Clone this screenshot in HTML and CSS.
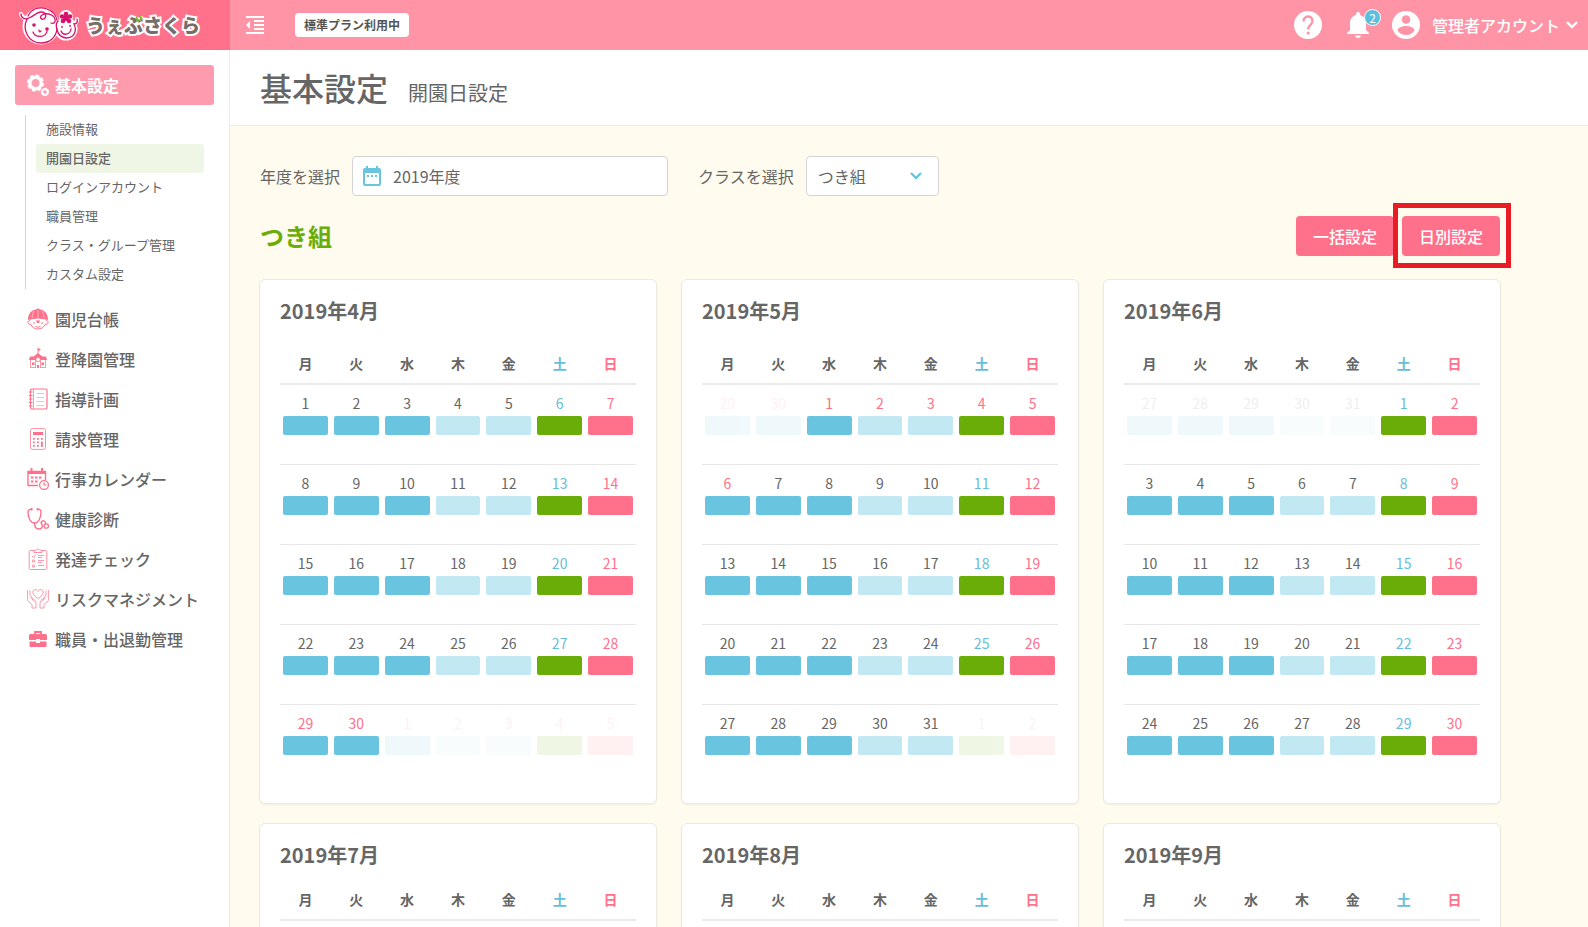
FILE: index.html
```html
<!DOCTYPE html>
<html lang="ja">
<head>
<meta charset="utf-8">
<meta name="viewport" content="width=device-width, initial-scale=1">
<title>開園日設定 | うぇぶさくら</title>
<link rel="stylesheet" href="styles.css">
</head>
<body>
<header class="topbar">
  <a class="brand" href="#" aria-label="うぇぶさくら">
    <svg class="brand-mark" viewBox="18 2 62 46" aria-hidden="true">
      <g fill="#fff" stroke="#fff" stroke-width="4" stroke-linejoin="round" stroke-linecap="round">
        <circle cx="41" cy="26" r="16.500"/><circle cx="66" cy="29" r="9.500"/><circle cx="66" cy="17" r="5"/><path fill="none" d="M21 14q1 4 5 4M77 19q0 4-3 6"/>
      </g>
      <g fill="none" stroke="#d8116b" stroke-width="1.300" stroke-linecap="round">
        <path d="M21 14c0 4 4 6 8 4 5-2 8-6 12-6 5 0 6 5 3 7-3 1-5-2-2-4 5-3 12 0 13 4 1 3-1 5-4 4"/>
        <path d="M28 16C31 9 39 6 47 9c5 2 9 6 10 11M27 19c-5 10 1 24 14 24 9 0 15-6 16-14"/>
        <path d="M58 21c-3 3-2 16 8 17 9 0 11-8 8-14 3 0 4-2 3-5"/>
        <path d="M33 32c2 6 13 6 14-1M39 30q0 3 2 1M61 31c2 5 9 4 10-2"/>
      </g>
      <g fill="#d8116b"><circle cx="34" cy="25" r="1.800"/><circle cx="47" cy="29" r="1.800"/><circle cx="62" cy="27" r=".9"/><circle cx="70" cy="26" r=".9"/>
        <circle cx="66" cy="14" r="2.300"/><circle cx="70" cy="16.500" r="2.300"/><circle cx="69" cy="21" r="2.300"/><circle cx="63" cy="21" r="2.300"/><circle cx="62" cy="16.500" r="2.300"/><circle cx="66" cy="18" r="3"/></g>
    </svg>
    <span class="brand-name">うぇぶさくら
      <svg class="brand-sprout" viewBox="0 0 8 8" aria-hidden="true"><path d="M1.500 3l1.500 3M5 1l1.500 3" fill="none" stroke="#7cbb2a" stroke-width="2.200" stroke-linecap="round"/></svg>
    </span>
  </a>
  <button class="icon-button" type="button" aria-label="メニューを閉じる">
    <svg class="menu-icon" viewBox="0 0 18 18" aria-hidden="true"><path fill="#fff" d="M0 0h18v2H0zM8 4h10v2H8zM8 8h10v2H8zM8 12h10v2H8zM0 16h18v2H0zM4 5v8L0 9z"/></svg>
  </button>
  <span class="plan">標準プラン利用中</span>
  <div class="tools">
    <button class="icon-button" type="button" aria-label="ヘルプ">
      <svg class="round-icon" viewBox="0 0 28 28" aria-hidden="true"><circle cx="14" cy="14" r="14" fill="#fff"/><path d="M9.500 10.500C9.500 4 18.500 4 18.500 10c0 4-4.300 4-4.300 8.500" fill="none" stroke="#ff94a7" stroke-width="2.400"/><circle cx="14.200" cy="22" r="1.600" fill="#ff94a7"/></svg>
    </button>
    <button class="icon-button bell" type="button" aria-label="お知らせ">
      <svg class="bell-icon" viewBox="0 0 22 26" aria-hidden="true"><path fill="#fff" d="M11 0c1.300 0 2 .8 2 2v1c4 1 6 4.200 6 8v7l3 3v1H0v-1l3-3v-7c0-3.800 2-7 6-8V2c0-1.200.7-2 2-2zM8 23.500h6c0 3.300-6 3.300-6 0z"/></svg>
      <span class="count">2</span>
    </button>
    <button class="account" type="button">
      <svg class="round-icon" viewBox="0 0 28 28" aria-hidden="true"><circle cx="14" cy="14" r="14" fill="#fff"/><circle cx="14" cy="8.500" r="4.300" fill="#ff94a7"/><path fill="#ff94a7" d="M5.500 19.500C6 13.500 22 13.500 22.500 19.500c-4 6-13 6-17 0z"/></svg>
      <span>管理者アカウント</span>
      <svg class="chevron" viewBox="0 0 12 8" aria-hidden="true"><path d="M1 1l5 5 5-5" fill="none" stroke="#fff" stroke-width="2.400"/></svg>
    </button>
  </div>
</header>

<div class="shell">
  <nav class="sidebar" aria-label="メインメニュー">
    <a class="nav-item is-active" href="#">
      <svg class="nav-icon" viewBox="0 0 22 22" aria-hidden="true"><circle cx="8.500" cy="9" r="5.700" fill="none" stroke="#fff" stroke-width="3.400"/><circle cx="8.500" cy="9" r="7.600" fill="none" stroke="#fff" stroke-width="2" stroke-dasharray="3.500 2.470"/><circle cx="18" cy="18" r="2.800" fill="none" stroke="#fff" stroke-width="2"/><circle cx="18" cy="18" r="3.800" fill="none" stroke="#fff" stroke-dasharray="1.500 1.480"/></svg>
      基本設定</a>
    <div class="subnav">
      <a class="sub-item" href="#">施設情報</a>
      <a class="sub-item is-current" href="#">開園日設定</a>
      <a class="sub-item" href="#">ログインアカウント</a>
      <a class="sub-item" href="#">職員管理</a>
      <a class="sub-item" href="#">クラス・グループ管理</a>
      <a class="sub-item" href="#">カスタム設定</a>
    </div>
    <a class="nav-item" href="#">
      <svg class="nav-icon" viewBox="0 0 22 22" aria-hidden="true"><path fill="#ff718b" d="M1 12C1 5 5 2 9 1.500Q11-.5 13 1.500C17 2 21 5 21 12q-10-3-20 0z"/><path d="M11 2v8M7 3q-2 3-2 7M15 3q2 3 2 7" stroke="#ffc4ce" fill="none" stroke-width=".8"/><path d="M3 12.500c-3 0-3 4 1 4 2 6 12 6 14 0 4 0 4-4 1-4" fill="none" stroke="#ff718b"/><path d="M6 15h2M14 15h2M8.500 18.500q2.500 1.500 5 0" stroke="#ff718b" fill="none"/><path d="M9 12.500h4l-1 2.500h-2z" fill="#ff718b"/></svg>
      園児台帳</a>
    <a class="nav-item" href="#">
      <svg class="nav-icon" viewBox="0 0 22 22" aria-hidden="true"><path fill="#ff718b" d="M11 0l3 1.500L11.500 3v2.500l4 3H19l1 3.500H2l1-3.500h3.500l4-3V0z"/><path d="M3.500 12v8M18.500 12v8M3 19.500h6M13 19.500h6M8.500 12v8M13.500 12v8" stroke="#ff8fa3" stroke-width=".9" fill="none"/><circle cx="11" cy="11.500" r="2.200" fill="#fff" stroke="#ff718b" stroke-width=".8"/><path d="M5 14.500h2.500v2.500H5zM14.500 14.500H17v2.500h-2.500zM10 17h2v3h-2z" fill="#ff718b"/></svg>
      登降園管理</a>
    <a class="nav-item" href="#">
      <svg class="nav-icon" viewBox="0 0 22 22" aria-hidden="true"><rect x="3.500" y="1" width="16.500" height="20" rx="1.500" fill="none" stroke="#ff718b" stroke-width="1.200"/><path d="M6.500 1v20" stroke="#ff718b" stroke-width=".7"/><path d="M2 4h3.500M2 7.500h3.500M2 11h3.500M2 14.500h3.500M2 18h3.500" stroke="#ff718b" stroke-width="1.200"/><path d="M9.500 5.500h7.500M9.500 9.500h7.500M9.500 13.500h7.500M9.500 17.500h7.500" stroke="#ff9bae" stroke-width=".7"/></svg>
      指導計画</a>
    <a class="nav-item" href="#">
      <svg class="nav-icon" viewBox="0 0 22 22" aria-hidden="true"><rect x="3.500" y=".6" width="15" height="20.800" rx="2" fill="none" stroke="#ff8fa3"/><path fill="#ff718b" d="M6 4h10v3H6zM6 10h1.800v1.800H6zM10 10h1.800v1.800H10zM14 10h1.800v1.800H14zM6 13.500h1.800v1.800H6zM10 13.500h1.800v1.800H10zM14 13.500h1.800V19H14zM6 17h1.800v1.800H6zM10 17h1.800v1.800H10z"/></svg>
      請求管理</a>
    <a class="nav-item" href="#">
      <svg class="nav-icon" viewBox="0 0 22 22" aria-hidden="true"><path d="M1 18V3.500h17.500V12M1 17.500h10" fill="none" stroke="#ff718b" stroke-width="1.400"/><path fill="#ff718b" d="M1 3h18v3H1zM3.500 0h2v4h-2zM14 0h2v4h-2zM4 8.500h2.500v2H4zM8 8.500h2.500v2H8zM12 8.500h2.500v2H12zM4 12.500h2.500v2H4zM8 12.500h2.500v2H8z"/><circle cx="17" cy="17" r="4.400" fill="#fff" stroke="#ff718b" stroke-width="1.300"/><path d="M17 14.500V17h2.500" stroke="#ff718b" fill="none" stroke-width="1.200"/></svg>
      行事カレンダー</a>
    <a class="nav-item" href="#">
      <svg class="nav-icon" viewBox="0 0 22 22" aria-hidden="true"><path d="M5.500 1.200C3 1 1 1.500 1 4c0 6 2.500 11 6.500 11S14 10 14 4c0-2.500-1.500-3-4-2.800M7.500 15c0 3 1 6 4.500 6 5 0 3-5 2-6.500 2-3.500 5-1 4.500 1.500" fill="none" stroke="#ff718b" stroke-width="1.400"/><path d="M4.500 0v2.600M10.500 0v2.600" stroke="#ff718b" stroke-width="1.500"/><circle cx="19.300" cy="18" r="2.200" fill="#fff" stroke="#ff718b" stroke-width="1.300"/></svg>
      健康診断</a>
    <a class="nav-item" href="#">
      <svg class="nav-icon" viewBox="0 0 22 22" aria-hidden="true"><path d="M7 2.500H3.500q-1.300 0-1.300 1.300v16.400q0 1.300 1.300 1.300h15q1.300 0 1.300-1.300V3.800q0-1.300-1.300-1.300H15M7 4.500V2.200h2.500q1.500-3 3 0H15v2.300z" fill="none" stroke="#ff8fa3"/><path d="M5 8l1.500 1.500L9 6.500M11 7.500h6M11 9.500h4M5.500 12h2v2h-2zM11 12.500h6M11 14.500h4M5.500 17h2v2h-2zM11 17.500h6" fill="none" stroke="#ff8fa3" stroke-width=".9"/></svg>
      発達チェック</a>
    <a class="nav-item" href="#">
      <svg class="nav-icon" viewBox="0 0 22 22" aria-hidden="true"><path d="M11 10.500C3 5.500 6 1.500 8.500 1.500 10 1.500 11 3.500 11 3.500s1-2 2.500-2c2.500 0 5.500 4-2.500 9zM.6 2v10.500l4.400 4V20h4v-4.500c0-2-2-4.500-4-5.500L3 6.500V2.500M4 9.500l3 4M21.400 2v10.500l-4.400 4V20h-4v-4.500c0-2 2-4.500 4-5.500l2-3.500V2.500M18 9.500l-3 4" fill="none" stroke="#ff8095" stroke-width=".8" stroke-linejoin="round"/></svg>
      リスクマネジメント</a>
    <a class="nav-item" href="#">
      <svg class="nav-icon" viewBox="0 0 22 22" aria-hidden="true"><path d="M8 6V4h6v2" fill="none" stroke="#ff718b" stroke-width="1.800"/><path fill="#ff718b" d="M3.500 6h15Q20 6 20 7.500V12h-7v-1H9v1H2V7.500Q2 6 3.500 6zM2.500 13.500H9V15h4v-1.500h6.500V18q0 1-1 1h-15q-1 0-1-1z"/></svg>
      職員・出退勤管理</a>
  </nav>

  <main class="main">
    <div class="page-head">
      <h1 class="page-title">基本設定</h1>
      <span class="page-subtitle">開園日設定</span>
    </div>
    <div class="content">
      <form class="filters">
        <label class="filter-label" for="year">年度を選択</label>
        <div class="year-field">
          <svg class="calendar-icon" viewBox="0 0 18 20" aria-hidden="true"><path fill="#68c4df" fill-rule="evenodd" d="M3 0h2v2h8V0h2v2h1q2 0 2 2v14q0 2-2 2H2q-2 0-2-2V4q0-2 2-2h1zM2 7v11h14V7zM4 9h2v2H4zM8 9h2v2H8zM12 9h2v2h-2z"/></svg>
          <input class="year-input" id="year" type="text" value="2019年度">
        </div>
        <label class="filter-label class-label" for="class">クラスを選択</label>
        <div class="select-field">
          <select class="class-select" id="class"><option>つき組</option></select>
          <svg class="chevron select-chevron" viewBox="0 0 12 8" aria-hidden="true"><path d="M1 1l5 5 5-5" fill="none" stroke="#68c4df" stroke-width="2.400"/></svg>
        </div>
      </form>
      <div class="group-bar">
        <h2 class="group-title">つき組</h2>
        <button class="action" type="button">一括設定</button>
        <div class="highlighted"><button class="action" type="button">日別設定</button></div>
      </div>
      <div class="months" id="months"></div>
    </div>
  </main>
</div>
<script src="calendar.js"></script>
</body>
</html>
```

FILE: styles.css
```css
* { box-sizing: border-box; }

body {
  margin: 0;
  height: 100vh;
  display: flex;
  flex-direction: column;
  overflow: hidden;
  color: #666;
  background: #fff;
  font-family: "Noto Sans CJK JP", "Noto Sans", sans-serif;
  font-size: 16px;
  line-height: 24px;
}

a { color: inherit; text-decoration: none; }
button, input, select { font: inherit; color: inherit; }
button { border: 0; padding: 0; background: none; cursor: pointer; }
svg { display: block; flex: none; }

.topbar {
  flex: none;
  height: 50px;
  display: flex;
  align-items: center;
  background: #ff94a7;
  color: #fff;
}
.brand {
  width: 230px;
  height: 50px;
  padding-left: 18px;
  margin-right: 16px;
  display: flex;
  align-items: center;
  gap: 6px;
  background: #ff718b;
}
.brand-mark { width: 62px; height: 46px; }
.brand-name {
  position: relative;
  font-size: 19px;
  font-weight: 900;
  color: #766c68;
  -webkit-text-stroke: 4px #fff;
  paint-order: stroke fill;
}
.brand-sprout {
  position: absolute;
  top: 2px;
  left: 49px;
  width: 8px;
  height: 8px;
}
.menu-icon { width: 18px; height: 18px; }
.plan {
  margin-left: 31px;
  padding: 0 9px;
  border-radius: 4px;
  background: #fff;
  color: #555;
  font-size: 12px;
  font-weight: 700;
}
.tools {
  margin-left: auto;
  padding-right: 10px;
  display: flex;
  align-items: center;
}
.round-icon { width: 28px; height: 28px; }
.bell { position: relative; margin: 0 23px 0 25px; }
.bell-icon { width: 22px; height: 26px; }
.count {
  position: absolute;
  top: -3px;
  left: 17px;
  width: 17px;
  height: 17px;
  border: 1px solid #fff;
  border-radius: 50%;
  background: #5bc0de;
  color: #fff;
  font-size: 12px;
  line-height: 15px;
}
.account { display: flex; align-items: center; font-weight: 500; }
.account span { margin: 0 6px 0 12px; }
.chevron { width: 12px; height: 8px; }

.shell { flex: 1; min-height: 0; display: flex; }
.sidebar {
  flex: none;
  width: 230px;
  padding: 15px;
  border-right: 1px solid #ebebeb;
}
.nav-item {
  height: 40px;
  padding-left: 12px;
  display: flex;
  align-items: center;
  gap: 6px;
  border-radius: 3px;
  font-weight: 500;
  white-space: nowrap;
}
.nav-item.is-active { background: #ff9bae; color: #fff; font-weight: 700; }
.nav-icon { width: 22px; height: 22px; }
.subnav {
  margin: 10px;
  padding-left: 10px;
  border-left: 1px solid #d4d4d4;
}
.sub-item {
  display: block;
  padding: 0 0 2px 10px;
  border-radius: 3px;
  font-size: 13px;
  line-height: 27px;
}
.sub-item.is-current { background: #eff6e6; font-weight: 500; }

.main {
  flex: 1;
  min-width: 0;
  overflow-y: auto;
  scrollbar-width: none;
  background: #fffbee;
}
.page-head {
  height: 76px;
  padding: 0 30px;
  display: flex;
  align-items: center;
  gap: 20px;
  background: #fff;
  border-bottom: 1px solid #ebebeb;
}
.page-title { margin: 0; padding-bottom: 2px; font-size: 32px; line-height: 48px; font-weight: 500; }
.page-subtitle { padding-top: 10px; font-size: 20px; }

.content { padding: 30px 87px 30px 30px; }
.filters { display: flex; align-items: center; }
.filter-label { margin-right: 12px; }
.class-label { margin-left: 30px; }
.year-field, .select-field {
  height: 40px;
  display: flex;
  align-items: center;
  border: 1px solid #d4d4d4;
  border-radius: 4px;
  background: #fff;
}
.year-field { width: 316px; padding: 0 10px; gap: 12px; }
.calendar-icon { width: 18px; height: 20px; }
.year-input { flex: 1; min-width: 0; padding: 0; border: 0; background: none; }
.select-field { position: relative; width: 133px; }
.class-select {
  width: 100%;
  height: 100%;
  padding: 0 11px;
  border: 0;
  background: none;
  appearance: none;
}
.select-chevron { position: absolute; right: 16px; pointer-events: none; }

.group-bar {
  padding-top: 7px;
  display: flex;
  align-items: center;
}
.group-title {
  margin: 0 auto 0 0;
  font-size: 24px;
  line-height: 36px;
  font-weight: 700;
  color: #6aad08;
}
.action {
  width: 98px;
  height: 40px;
  border-radius: 4px;
  background: #ff718b;
  color: #fff;
  font-weight: 500;
}
.highlighted {
  margin-left: -1px;
  margin-right: -10px;
  padding: 8px 6px 7px 4px;
  border: 5px solid #e81c24;
}

.months {
  margin-top: 11px;
  margin-left: -1px;
  display: grid;
  grid-template-columns: repeat(3, minmax(0, 1fr));
  gap: 19px 24px;
}
.month {
  padding: 19px 20px;
  border: 1px solid #ebe9e0;
  border-radius: 6px;
  background: #fff;
  box-shadow: 0 1px 2px rgba(0, 0, 0, .06);
}
.month-title { margin: 0 0 28px; font-size: 20px; line-height: 24px; font-weight: 700; }
.month.is-compact { min-height: 320px; }
.month.is-compact .month-title { margin-bottom: 20px; }
.days {
  width: 100%;
  table-layout: fixed;
  border-collapse: separate;
  border-spacing: 0;
  text-align: center;
}
.days th {
  padding: 0 0 8px;
  border-bottom: 2px solid #ebebeb;
  font-size: 14px;
  font-weight: 700;
}
.days td { padding: 6px 3px 29px; border-bottom: 1px solid #e6e6e6; font-size: 14px; }
.days tr:last-child td { border-bottom: 0; }
.days .sat { color: #68bdd9; }
.days .holiday { color: #ff718b; }
.bar { display: block; height: 19px; border-radius: 2px; background: #68c4df; }
.bar.light { background: #c2e8f3; }
.bar.half { background: #6aad08; }
.bar.closed { background: #ff718b; }
.outside { opacity: .1; }
.date { display: block; padding-bottom: 1px; }
```

FILE: calendar.js
```js
const weekdays = ["月", "火", "水", "木", "金", "土", "日"];
const bars = ["", "", "", "light", "light", "half", "closed"];
const holidays = new Set(["4/29", "4/30", "5/1", "5/2", "5/3", "5/6"]);

function textClass(column, date) {
  const key = `${date.getMonth() + 1}/${date.getDate()}`;
  if (column === 6 || holidays.has(key) || key === "5/4") return "holiday";
  return column === 5 ? "sat" : "";
}

function weekRows(year, month) {
  const offset = (new Date(year, month - 1, 1).getDay() + 6) % 7;
  const length = new Date(year, month, 0).getDate();
  const weeks = Math.ceil((offset + length) / 7);
  let rows = "";
  for (let week = 0; week < weeks; week++) {
    rows += "<tr>";
    for (let column = 0; column < 7; column++) {
      const date = new Date(year, month - 1, 1 - offset + week * 7 + column);
      const outside = date.getMonth() !== month - 1 ? "outside" : "";
      rows += `<td class="${textClass(column, date)}"><div class="${outside}"><span class="date">${date.getDate()}</span><span class="bar ${bars[column]}"></span></div></td>`;
    }
    rows += "</tr>";
  }
  return rows;
}

function monthCard(year, month, filled) {
  const head = weekdays
    .map((name, i) => `<th scope="col" class="${i === 5 ? "sat" : i === 6 ? "holiday" : ""}">${name}</th>`)
    .join("");
  return `<section class="month ${filled ? "" : "is-compact"}"><h3 class="month-title">${year}年${month}月</h3>
    <table class="days"><thead><tr>${head}</tr></thead><tbody>${filled ? weekRows(year, month) : ""}</tbody></table></section>`;
}

document.getElementById("months").innerHTML = [4, 5, 6, 7, 8, 9].map((m) => monthCard(2019, m, m < 7)).join("");
```
